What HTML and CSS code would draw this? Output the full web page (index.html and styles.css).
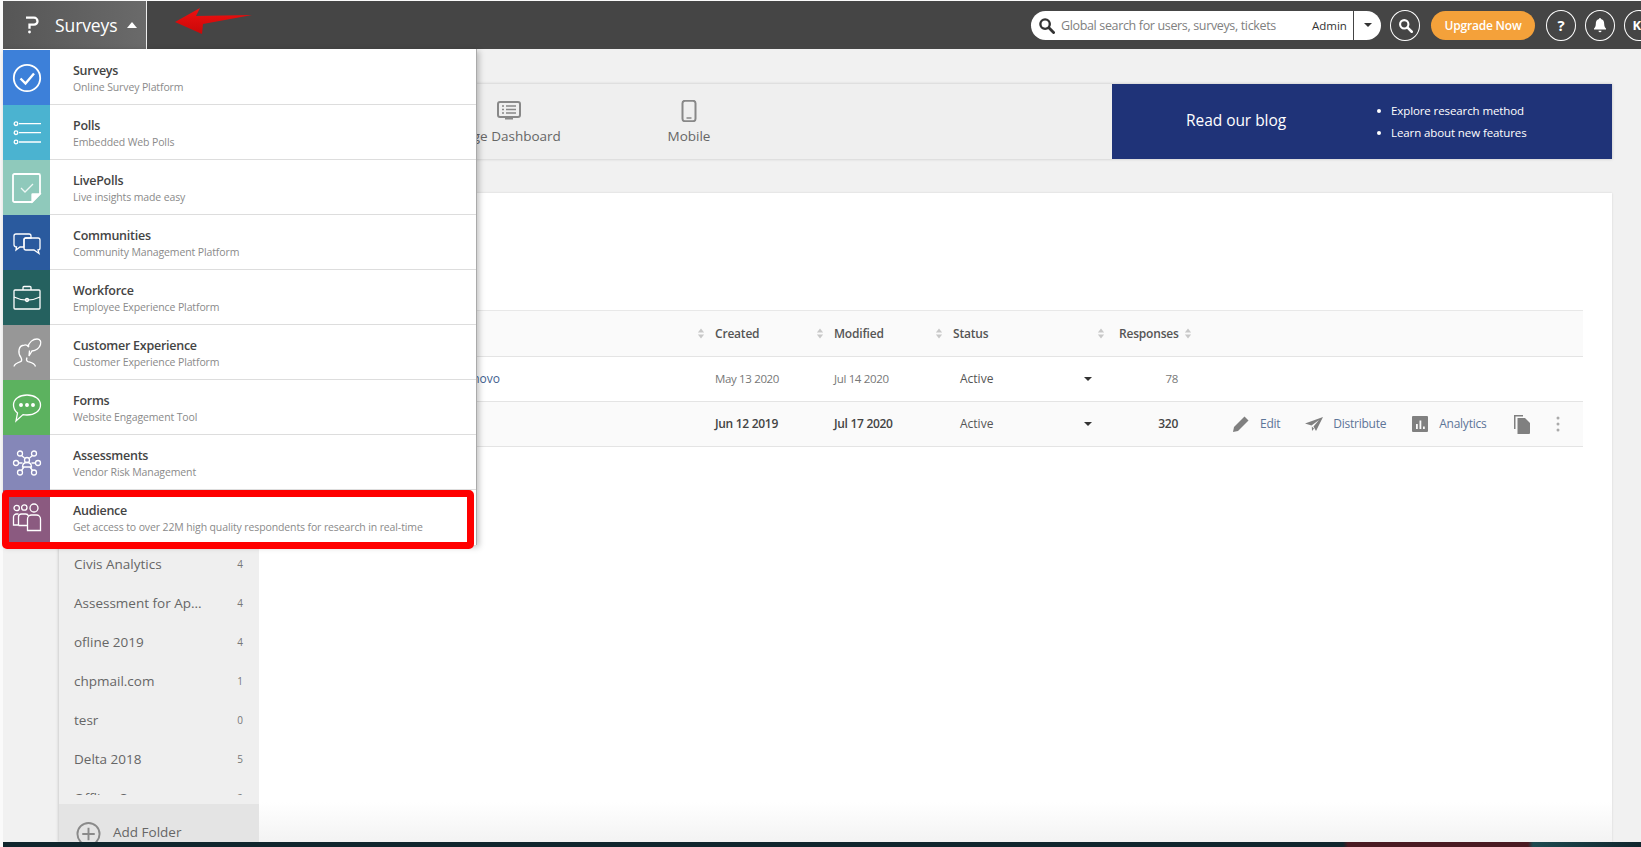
FILE: index.html
```html
<!DOCTYPE html>
<html lang="en">
<head>
<meta charset="utf-8">
<title>Surveys</title>
<link rel="stylesheet" href="styles.css">
</head>
<body>
<svg class="defs" width="0" height="0" aria-hidden="true">
  <symbol id="sort" viewBox="0 0 9 12"><path d="M4.500 0.500 8 5H1zM1 7h7l-3.500 4.500z"/></symbol>
  <symbol id="mag" viewBox="0 0 18 18"><circle cx="7.500" cy="7.500" r="5" fill="none" stroke="currentColor" stroke-width="2.500"/><path d="M11.500 11.500l5 5" stroke="currentColor" stroke-width="3" stroke-linecap="round"/></symbol>
</svg>
<div class="page">
  <header class="topbar">
    <div class="brand">
      <svg class="logo" viewBox="0 0 14 18"><path d="M1 1.700h8a3.500 3.500 0 0 1 0 7H4.500v4" fill="none" stroke="#fff" stroke-width="2.300"/><circle cx="4.500" cy="16" r="1.400" fill="#fff"/></svg>
      <span class="brand-name">Surveys</span>
      <span class="caret-up"></span>
    </div>
    <div class="tools">
      <div class="search">
        <svg class="search-mag"><use href="#mag"/></svg>
        <span class="search-text">Global search for users, surveys, tickets</span>
        <span class="search-scope">Admin</span>
        <span class="search-drop"><span class="caret-down"></span></span>
      </div>
      <span class="round"><svg class="round-mag"><use href="#mag"/></svg></span>
      <span class="upgrade">Upgrade Now</span>
      <span class="round round-help">?</span>
      <span class="round"><svg class="bell" viewBox="0 0 14 16"><path d="M7 1a1 1 0 0 1 1 1c2.500.6 3.200 2.700 3.200 5 0 2.500.8 3.500 1.800 4.500v1H1v-1C2 10.500 2.800 9.500 2.800 7c0-2.300.7-4.400 3.200-5a1 1 0 0 1 1-1zM5.500 13.800h3a1.500 1.500 0 0 1-3 0z" fill="#fff"/></svg></span>
      <span class="round round-user">KI</span>
    </div>
  </header>

  <main class="content">
    <section class="strip">
      <nav class="tabs">
        <div class="tab">
          <svg class="tab-icon" viewBox="0 0 24 20"><rect x="1" y="1" width="22" height="15" rx="2" fill="none" stroke="#888" stroke-width="2"/><path d="M5 5h2M9 5h10M5 8.500h2M9 8.500h10M5 12h2M9 12h10" stroke="#888" stroke-width="1.500"/><rect x="8" y="16" width="8" height="2.500" fill="#888"/></svg>
          <span>Page Dashboard</span>
        </div>
        <div class="tab">
          <svg class="tab-icon" viewBox="0 0 24 22"><rect x="5.500" y="0.800" width="13" height="20.400" rx="2.500" fill="none" stroke="#888" stroke-width="2"/><path d="M9.500 18h5" stroke="#888" stroke-width="1.500"/></svg>
          <span>Mobile</span>
        </div>
      </nav>
      <aside class="blog">
        <span class="blog-title">Read our blog</span>
        <ul class="blog-list">
          <li>Explore research method</li>
          <li>Learn about new features</li>
        </ul>
      </aside>
    </section>

    <section class="card">
      <aside class="folders">
        <ul class="folder-list">
          <li><span>Civis Analytics</span><b>4</b></li>
          <li><span>Assessment for Ap...</span><b>4</b></li>
          <li><span>ofline 2019</span><b>4</b></li>
          <li><span>chpmail.com</span><b>1</b></li>
          <li><span>tesr</span><b>0</b></li>
          <li><span>Delta 2018</span><b>5</b></li>
          <li><span>Offline Surveys</span><b>2</b></li>
        </ul>
        <div class="add-folder">
          <svg class="add-icon" viewBox="0 0 26 26"><circle cx="13" cy="13" r="11.500" fill="none" stroke="#8a8a8a" stroke-width="2"/><path d="M13 6.500v13M6.500 13h13" stroke="#8a8a8a" stroke-width="2"/></svg>
          <span>Add Folder</span>
        </div>
      </aside>
      <div class="pane">
        <div class="table">
          <div class="tr th">
            <div class="cell sortable"><span>Name</span><svg class="sort"><use href="#sort"/></svg></div>
            <div class="cell sortable"><span>Created</span><svg class="sort"><use href="#sort"/></svg></div>
            <div class="cell sortable"><span>Modified</span><svg class="sort"><use href="#sort"/></svg></div>
            <div class="cell sortable sortable-wide"><span>Status</span><svg class="sort"><use href="#sort"/></svg></div>
            <div class="cell resp-head"><span>Responses</span><svg class="sort"><use href="#sort"/></svg></div>
            <div class="cell"></div>
          </div>
          <div class="tr">
            <div class="cell name"><a>Lenovo</a></div>
            <div class="cell muted">May 13 2020</div>
            <div class="cell muted">Jul 14 2020</div>
            <div class="cell status"><span>Active</span><span class="caret-down"></span></div>
            <div class="cell num muted">78</div>
            <div class="cell"></div>
          </div>
          <div class="tr tr-hover">
            <div class="cell name"></div>
            <div class="cell strong">Jun 12 2019</div>
            <div class="cell strong">Jul 17 2020</div>
            <div class="cell status"><span>Active</span><span class="caret-down"></span></div>
            <div class="cell num strong">320</div>
            <div class="cell actions">
              <span class="action"><svg viewBox="0 0 18 18"><path d="M1 17l1-5L12.500 1.500l4 4L6 16z" fill="#808080"/></svg><a>Edit</a></span>
              <span class="action"><svg viewBox="0 0 18 18"><path d="M0 8.500 18 2 11 16 8.500 11.500 14 5 6.500 10.500z" fill="#808080"/><path d="M6.800 11.500 7 16l2-2.500z" fill="#808080"/></svg><a>Distribute</a></span>
              <span class="action"><svg viewBox="0 0 18 18"><path fill-rule="evenodd" d="M2 1h14a1 1 0 0 1 1 1v14a1 1 0 0 1-1 1H2a1 1 0 0 1-1-1V2a1 1 0 0 1 1-1zM5 9v5h1.800V9zM8.500 5.500V14h1.800V5.500zM12 11.500V14h1.800v-2.500z" fill="#808080"/></svg><a>Analytics</a></span>
              <svg class="copy" viewBox="0 0 18 20"><path d="M1 1h9v1.500H2.500V15H1z" fill="#808080"/><path d="M4.500 4h7.500l5 5v10a1 1 0 0 1-1 1H4.500z" fill="#808080"/></svg>
              <svg class="dots" viewBox="0 0 4 16"><circle cx="2" cy="2" r="1.500"/><circle cx="2" cy="8" r="1.500"/><circle cx="2" cy="14" r="1.500"/></svg>
            </div>
          </div>
        </div>
      </div>
    </section>
  </main>
  <div class="taskbar"></div>

  <ul class="menu">
    <li class="menu-row">
      <span class="tile tile-surveys"><svg viewBox="0 0 28 28"><circle cx="14" cy="14" r="13.200" stroke-width="1.800"/><path d="M7.500 14.500l5 5L21 9.500" stroke-width="2.400"/></svg></span>
      <span class="menu-text"><b>Surveys</b><small>Online Survey Platform</small></span>
    </li>
    <li class="menu-row">
      <span class="tile tile-polls"><svg viewBox="0 0 28 28"><circle cx="3" cy="4.700" r="1.800"/><circle cx="3" cy="13.700" r="1.800"/><circle cx="3" cy="23" r="1.800"/><path d="M6 4.700h22M6 13.700h22M6 23h22"/></svg></span>
      <span class="menu-text"><b>Polls</b><small>Embedded Web Polls</small></span>
    </li>
    <li class="menu-row">
      <span class="tile tile-live"><svg viewBox="0 0 28 28"><path d="M1.500 0h24a1.500 1.500 0 0 1 1.500 1.500V20l-8 8H1.500A1.500 1.500 0 0 1 0 26.500V1.500A1.500 1.500 0 0 1 1.500 0z" stroke-width="1.800"/><path d="M27 20h-7.500a.5.500 0 0 0-.5.500V28z" fill="#fff"/><path d="M8 14l4 4 8-8" stroke-opacity=".85"/></svg></span>
      <span class="menu-text"><b>LivePolls</b><small>Live insights made easy</small></span>
    </li>
    <li class="menu-row">
      <span class="tile tile-comm"><svg viewBox="0 0 28 28"><path d="M3 5h13a2 2 0 0 1 2 2v2H13a2 2 0 0 0-2 2v7H7l-4 3 .5-3A2.500 2.500 0 0 1 1 15.500V7a2 2 0 0 1 2-2z"/><path d="M13 9h12a2 2 0 0 1 2 2v8a2 2 0 0 1-2 2l1 3.500-5-3.500h-8a2 2 0 0 1-2-2v-8a2 2 0 0 1 2-2z"/></svg></span>
      <span class="menu-text"><b>Communities</b><small>Community Management Platform</small></span>
    </li>
    <li class="menu-row">
      <span class="tile tile-work"><svg viewBox="0 0 28 28"><rect x="1" y="6" width="26" height="19" rx="1"/><path d="M10 6V3.500A1 1 0 0 1 11 2.500h6a1 1 0 0 1 1 1V6M1 13c8 4 18 4 26 0"/><circle cx="14" cy="16" r="1.500"/></svg></span>
      <span class="menu-text"><b>Workforce</b><small>Employee Experience Platform</small></span>
    </li>
    <li class="menu-row">
      <span class="tile tile-cx"><svg viewBox="0 0 28 28"><path d="M1 27.500c.5-3 4-4 7-5 1-1 1-2 0-4C5 15 4.500 6.500 11.500 6c2-.2 3.500.6 4.500 2M14 18.500c-.8 1.800-.8 3 .5 4 3 1 7 1.500 8 5"/><path d="M15 8c1-5 5-8 9-8 3 0 4.500 2.500 3.500 5.500-1 3.500-4.500 6.500-8.500 6.500l-3 5 .5-5.500"/></svg></span>
      <span class="menu-text"><b>Customer Experience</b><small>Customer Experience Platform</small></span>
    </li>
    <li class="menu-row">
      <span class="tile tile-forms"><svg viewBox="0 0 28 28"><path d="M14 1c7.500 0 13.500 4 13.500 10S21.500 21 14 21c-1.500 0-2.500 0-4-.4L3 27l1.500-8C2 17 .5 14.500.5 11 .5 5 6.500 1 14 1z"/><circle cx="8" cy="11" r="1.300" fill="#fff"/><circle cx="14" cy="11" r="1.300" fill="#fff"/><circle cx="20" cy="11" r="1.300" fill="#fff"/></svg></span>
      <span class="menu-text"><b>Forms</b><small>Website Engagement Tool</small></span>
    </li>
    <li class="menu-row">
      <span class="tile tile-assess"><svg viewBox="0 0 28 28"><circle cx="14" cy="11" r="2.500"/><path d="M9.500 18c0-3 2-4.500 4.500-4.500s4.500 1.500 4.500 4.500z"/><circle cx="7" cy="4.500" r="2.500"/><circle cx="21" cy="4.500" r="2.500"/><circle cx="3" cy="14" r="2.500"/><circle cx="25" cy="14" r="2.500"/><circle cx="7" cy="23.500" r="2.500"/><circle cx="21" cy="23.500" r="2.500"/><path d="M8.500 6.500l3 2.500M19.500 6.500l-3 2.500M5.500 14H9.500M18.500 14h4M8.500 21.500l2.500-3.500M19.500 21.500L17 18"/></svg></span>
      <span class="menu-text"><b>Assessments</b><small>Vendor Risk Management</small></span>
    </li>
    <li class="menu-row">
      <span class="tile tile-aud"><svg viewBox="0 0 28 28"><circle cx="3.700" cy="4" r="2.700"/><circle cx="11.300" cy="3.500" r="2.700"/><circle cx="21" cy="4" r="4"/><path d="M5.500 21H.5V13a3 3 0 0 1 3-3h2"/><path d="M5.500 21.500V13a3 3 0 0 1 3-3h4a3 3 0 0 1 3 2M5.500 21.500h9"/><path d="M14.500 26.500V15a4 4 0 0 1 4-4h5a4 4 0 0 1 4 4v11.500z"/></svg></span>
      <span class="menu-text"><b>Audience</b><small>Get access to over 22M high quality respondents for research in real-time</small></span>
    </li>
  </ul>
  <div class="mark-box"></div>
  <svg class="mark-arrow" viewBox="0 0 78 27"><defs><linearGradient id="arrowfill" x1="0" y1="0" x2="0" y2="1"><stop offset="0" stop-color="#f01010"/><stop offset="1" stop-color="#c80808"/></linearGradient></defs><polygon points="0,14 25,0 21,8 77,7 28,16 27,26" fill="url(#arrowfill)"/></svg>
</div>
</body>
</html>
```

FILE: styles.css
```css
* { box-sizing: border-box; }
html, body { margin: 0; height: 100%; overflow: hidden; }
body { font-family: "Open Sans", "Noto Sans", "Liberation Sans", sans-serif; color: #444; background: #fff; }
ul { margin: 0; padding: 0; list-style: none; }
.defs { position: absolute; }

.page { position: relative; width: 1641px; height: 847px; padding: 1px 0 0 3px; display: flex; flex-direction: column; overflow: hidden; background: #fafafa; }

.topbar { height: 48px; flex: none; display: flex; align-items: center; background: #454545; }
.brand { width: 144px; height: 48px; display: flex; align-items: center; padding-left: 22px; background: linear-gradient(90deg, #565656, #6a6a6a); border-right: 1px solid #eee; color: #fff; }
.logo { width: 14px; height: 18px; }
.brand-name { margin-left: 16px; font-size: 17.500px; letter-spacing: -0.100px; }
.caret-up { margin-left: 10px; border: 5px solid transparent; border-top: 0; border-bottom: 6px solid #fff; }
.caret-down { display: inline-block; border: 4px solid transparent; border-bottom: 0; border-top: 4px solid #333; }

.tools { margin-left: auto; margin-right: -13px; display: flex; align-items: center; color: #fff; }
.search { width: 350px; height: 29px; border-radius: 15px; background: #fff; display: flex; align-items: center; padding-left: 7px; color: #333; }
.search-mag { width: 17px; height: 17px; color: #333; }
.search-text { margin-left: 6px; font-size: 12.500px; color: #808080; width: 251px; letter-spacing: -0.350px; white-space: nowrap; }
.search-scope { font-size: 11.500px; width: 41px; letter-spacing: 0; }
.search-drop { flex: 1; height: 29px; border-left: 1px solid #444; display: flex; align-items: center; justify-content: center; }
.round { flex: none; width: 30px; height: 31px; margin-left: 9px; border: 1.500px solid #fff; border-radius: 50%; display: flex; align-items: center; justify-content: center; font-size: 15px; font-weight: 700; }
.round-mag { width: 15px; height: 15px; color: #fff; }
.bell { width: 14px; height: 16px; }
.round-help { margin-left: 11px; }
.round-user { font-size: 13px; margin-left: 9px; }
.upgrade { margin-left: 11px; width: 104px; height: 29px; border-radius: 15px; background: #f4a13a; display: flex; align-items: center; justify-content: center; font-size: 12px; font-weight: 600; letter-spacing: -0.200px; }

.content { flex: 1; min-height: 0; padding: 35px 29px 0 56px; display: flex; flex-direction: column; gap: 34px; background: #f1f1f1; }

.strip { height: 75px; flex: none; display: flex; background: #efefef; box-shadow: 0 0 3px rgba(0, 0, 0, .2); }
.tabs { flex: 1; display: flex; padding-left: 360px; }
.tab { width: 180px; display: flex; flex-direction: column; align-items: center; padding-top: 16px; font-size: 13.500px; color: #666; gap: 5px; }
.tab-icon { width: 24px; height: 22px; }
.blog { width: 500px; flex: none; display: flex; align-items: center; padding-left: 74px; background: #1f3378; color: #fff; }
.blog-title { width: 191px; margin-bottom: 3px; font-size: 15.500px; letter-spacing: -0.050px; white-space: nowrap; }
.blog-list { font-size: 11.500px; line-height: 22px; letter-spacing: -0.100px; }
.blog-list li { position: relative; padding-left: 14px; }
.blog-list li::before { content: ""; position: absolute; left: 0; top: 9px; width: 4px; height: 4px; border-radius: 50%; background: #fff; }

.card { flex: 1; min-height: 0; display: flex; box-shadow: 0 0 2px rgba(0, 0, 0, .12); }
.folders { width: 200px; flex: none; display: flex; flex-direction: column; background: #efefef; box-shadow: -2px 0 2px rgba(0, 0, 0, .06); }
.folder-list { height: 602px; flex: none; padding-top: 351px; overflow: hidden; font-size: 13.500px; color: #666; }
.folder-list li { height: 39px; display: flex; align-items: center; justify-content: space-between; padding: 0 16px 0 15px; }
.folder-list b { font-size: 10px; font-weight: 400; color: #777; }
.add-folder { flex: 1; min-height: 0; margin-top: 9px; overflow: hidden; display: flex; align-items: flex-start; gap: 12px; padding: 17px 0 0 17px; background: #e4e4e4; font-size: 13.500px; line-height: 22px; color: #666; }
.add-icon { width: 25px; height: 26px; flex: none; }
.pane { flex: 1; padding: 117px 29px 0 30px; background: linear-gradient(180deg, #fff calc(100% - 40px), #f3f3f3); }

.tr { display: grid; grid-template-columns: 426px 119px 119px 166px 59px 1fr; height: 45px; padding-bottom: 1px; align-items: center; border-bottom: 1px solid #e4e4e4; font-size: 12px; }
.th { height: 47px; background: #fafafa; border-top: 1px solid #e8e8e8; font-weight: 600; color: #555; letter-spacing: -0.200px; }
.tr-hover { background: #fafafa; }
.cell { min-width: 0; display: flex; align-items: center; }
.sortable { justify-content: space-between; padding-right: 10px; }
.sortable-wide { padding-right: 14px; }
.resp-head { gap: 5px; white-space: nowrap; }
.sort { width: 8px; height: 11px; flex: none; fill: #c8c8c8; }
.name { justify-content: flex-end; padding-right: 215px; }
.name a { font-size: 12px; color: #3f5f8f; }
.muted { color: #777; font-size: 11.500px; letter-spacing: -0.350px; }
.strong { font-weight: 600; color: #444; letter-spacing: -0.300px; }
.status { justify-content: space-between; padding: 0 27px 0 7px; color: #555; }
.num { justify-content: flex-end; }
.actions { padding-left: 54px; }
.action { display: flex; align-items: center; gap: 10px; margin-right: 25px; }
.action svg { width: 18px; height: 18px; flex: none; }
.action a { color: #5d7598; font-size: 12px; letter-spacing: -0.250px; }
.copy { width: 18px; height: 20px; flex: none; margin-left: 2px; }
.dots { width: 4px; height: 16px; margin-left: 25px; flex: none; fill: #aaa; }

.taskbar { height: 5px; flex: none; background: linear-gradient(90deg, #10262d 0, #10262d 1340px, #4a1a22 1345px, #4a1a22 1525px, #1d4a50 1530px, #10262d 100%); }

.menu { position: absolute; left: 3px; top: 49px; width: 474px; padding-top: 1px; background: #fff; border-right: 1px solid #aaa; box-shadow: 2px 2px 6px rgba(0, 0, 0, .25); }
.menu-row { height: 55px; display: flex; border-bottom: 1px solid #ddd; }
.menu-row:last-child { border-bottom: 0; }
.tile { width: 47px; flex: none; margin-bottom: -1px; display: flex; align-items: center; justify-content: center; }
.tile svg { width: 28px; height: 28px; overflow: visible; fill: none; stroke: #fff; stroke-width: 1.300; }
.tile-surveys { background: #3d80d9; }
.tile-polls { background: #4bb3d0; }
.tile-live { background: #8fc9bb; }
.tile-comm { background: #2a5a9e; }
.tile-work { background: #25615f; }
.tile-cx { background: #979797; }
.tile-forms { background: #5cb25f; }
.tile-assess { background: #8587b8; }
.tile-aud { background: #8b5a80; }
.menu-text { padding: 11.500px 0 0 23px; display: flex; flex-direction: column; gap: 1px; white-space: nowrap; }
.menu-text b { font-size: 12.500px; line-height: 17px; font-weight: 600; color: #444; letter-spacing: -0.250px; }
.menu-text small { font-size: 10.500px; line-height: 15px; color: #8a8a8a; letter-spacing: -0.120px; }

.mark-box { position: absolute; left: 2px; top: 490px; width: 472px; height: 59px; border: 7px solid #f00; border-radius: 5px; }
.mark-arrow { position: absolute; left: 175px; top: 8px; width: 78px; height: 27px; }
```
